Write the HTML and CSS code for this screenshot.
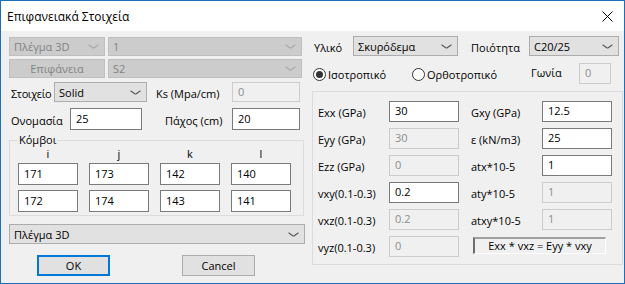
FILE: index.html
```html
<!DOCTYPE html>
<html lang="el">
<head>
    <meta charset="UTF-8">
    <title>Επιφανειακά Στοιχεία</title>
    <link rel="stylesheet" href="styles.css">
</head>
<body>
    <div class="window">
        <div class="titlebar">
            <span class="title">Επιφανειακά Στοιχεία</span>
            <svg class="close" width="11" height="11" viewBox="0 0 11 11">
                <path d="M0.5 0.5 L10.5 10.5 M10.5 0.5 L0.5 10.5" stroke="#000" stroke-width="1" fill="none"/>
            </svg>
        </div>
        <div class="content">
            <!-- left side -->
            <div class="left">
                <div class="row r1">
                    <div class="combo disabled mesh-type"><span>Πλέγμα 3D</span><i class="chev"></i></div>
                    <div class="combo disabled mesh-id"><span>1</span><i class="chev"></i></div>
                </div>
                <div class="row r2">
                    <button class="btn disabled mesh-type" disabled>Επιφάνεια</button>
                    <div class="combo disabled mesh-id"><span>S2</span><i class="chev"></i></div>
                </div>
                <div class="row r3">
                    <span class="lbl lbl-elem">Στοιχείο</span>
                    <div class="combo elem-type"><span>Solid</span><i class="chev"></i></div>
                    <span class="lbl lbl-ks">Ks (Mpa/cm)</span>
                    <input class="field small" type="text" value="0" disabled>
                </div>
                <div class="row r4">
                    <span class="lbl lbl-name">Ονομασία</span>
                    <input class="field name" type="text" value="25">
                    <span class="lbl lbl-thick">Πάχος (cm)</span>
                    <input class="field small" type="text" value="20">
                </div>
                <fieldset class="nodes">
                    <legend>Κόμβοι</legend>
                    <div class="node-grid heads">
                        <span>i</span><span>j</span><span>k</span><span>l</span>
                    </div>
                    <div class="node-grid inputs">
                        <input class="field" type="text" value="171">
                        <input class="field" type="text" value="173">
                        <input class="field" type="text" value="142">
                        <input class="field" type="text" value="140">
                        <input class="field" type="text" value="172">
                        <input class="field" type="text" value="174">
                        <input class="field" type="text" value="143">
                        <input class="field" type="text" value="141">
                    </div>
                </fieldset>
                <div class="combo mesh-wide"><span>Πλέγμα 3D</span><i class="chev"></i></div>
                <div class="buttons">
                    <button class="btn ok">OK</button>
                    <button class="btn cancel">Cancel</button>
                </div>
            </div>

            <!-- right side -->
            <div class="right">
                <div class="row material-row">
                    <span class="lbl lbl-mat">Υλικό</span>
                    <div class="combo material"><span>Σκυρόδεμα</span><i class="chev"></i></div>
                    <span class="lbl lbl-quality">Ποιότητα</span>
                    <div class="combo quality"><span>C20/25</span><i class="chev"></i></div>
                </div>
                <div class="row radio-row">
                    <label class="radio iso"><span class="dot checked"></span>Ισοτροπικό</label>
                    <label class="radio ortho"><span class="dot"></span>Ορθοτροπικό</label>
                    <span class="lbl lbl-angle">Γωνία</span>
                    <input class="field angle" type="text" value="0" disabled>
                </div>
                <div class="props">
                    <span class="lbl">Exx (GPa)</span>
                    <input class="field" type="text" value="30">
                    <span class="lbl col2">Gxy (GPa)</span>
                    <input class="field" type="text" value="12.5">

                    <span class="lbl">Eyy (GPa)</span>
                    <input class="field" type="text" value="30" disabled>
                    <span class="lbl col2">ε (kN/m3)</span>
                    <input class="field" type="text" value="25">

                    <span class="lbl">Ezz (GPa)</span>
                    <input class="field" type="text" value="0" disabled>
                    <span class="lbl col2">atx*10-5</span>
                    <input class="field" type="text" value="1">

                    <span class="lbl">vxy(0.1-0.3)</span>
                    <input class="field" type="text" value="0.2">
                    <span class="lbl col2">aty*10-5</span>
                    <input class="field" type="text" value="1" disabled>

                    <span class="lbl">vxz(0.1-0.3)</span>
                    <input class="field" type="text" value="0.2" disabled>
                    <span class="lbl col2">atxy*10-5</span>
                    <input class="field" type="text" value="1" disabled>

                    <span class="lbl">vyz(0.1-0.3)</span>
                    <input class="field" type="text" value="0" disabled>
                    <div class="formula">Exx * vxz = Eyy * vxy</div>
                </div>
            </div>
        </div>
    </div>
</body>
</html>
```

FILE: styles.css
```css
* {
    margin: 0;
    padding: 0;
    box-sizing: border-box;
}
body {
    margin: 0;
    background: #fff;
    font-family: 'Open Sans', 'Noto Sans', sans-serif;
    font-size: 11px;
    color: #000;
}
.window {
    width: 625px;
    height: 284px;
    border: 1px solid #1c6fb8;
    background: #f0f0f0;
    display: flex;
    flex-direction: column;
}
.titlebar {
    height: 30px;
    flex: none;
    background: #fff;
    display: flex;
    align-items: center;
    justify-content: space-between;
    padding: 0 11px 0 6px;
}
.title {
    font-size: 12px;
}
.content {
    display: flex;
    gap: 7px;
    padding: 6px 0 0 8px;
}
.row {
    display: flex;
    align-items: center;
}
.lbl {
    padding-top: 2px;
    white-space: nowrap;
}

/* combo boxes */
.combo {
    display: flex;
    align-items: center;
    justify-content: space-between;
    height: 100%;
    padding: 0 6px 0 4px;
    background: #e1e1e1;
    border: 1px solid #adadad;
    white-space: nowrap;
}
.combo .chev {
    width: 9px;
    height: 5px;
    flex: none;
    position: relative;
}
.combo .chev::before,
.combo .chev::after {
    content: '';
    position: absolute;
    top: 2px;
    width: 6px;
    height: 1px;
    background: #555;
}
.combo .chev::before {
    left: -1px;
    transform: rotate(35deg);
}
.combo .chev::after {
    right: -1px;
    transform: rotate(-35deg);
}
.combo.disabled {
    background: #cccccc;
    border-color: #bfbfbf;
    color: #838383;
}
.combo.disabled .chev::before,
.combo.disabled .chev::after {
    background: #a8a8a8;
}

/* text fields */
.field {
    height: 100%;
    border: 1px solid #7a7a7a;
    background: #fff;
    font-family: inherit;
    font-size: 11px;
    color: #000;
    padding: 0 0 2px 5px;
    outline: none;
}
.field:disabled {
    background: #f0f0f0;
    border-color: #cccccc;
    color: #8d8d8d;
}

/* buttons */
.btn {
    font-family: inherit;
    font-size: 11px;
    background: #e1e1e1;
    border: 1px solid #adadad;
    color: #000;
}
.btn.disabled {
    background: #cccccc;
    border-color: #bfbfbf;
    color: #838383;
}

/* left column */
.left {
    width: 296px;
    display: flex;
    flex-direction: column;
}
.r1 {
    height: 19px;
    gap: 3px;
}
.r2 {
    height: 19px;
    gap: 3px;
    margin-top: 3px;
}
.mesh-type {
    width: 96px;
    height: 100%;
}
.mesh-id {
    width: 194px;
}
.r3 {
    height: 20px;
    margin-top: 4px;
}
.lbl-elem {
    width: 45px;
    padding-left: 2px;
    letter-spacing: -0.4px;
}
.elem-type {
    width: 93px;
}
.lbl-ks {
    width: 85px;
    padding-left: 9px;
}
.field.small {
    width: 68px;
}
.r4 {
    height: 22px;
    margin-top: 6px;
}
.lbl-name {
    width: 61px;
    padding-left: 2px;
}
.field.name {
    width: 72px;
}
.lbl-thick {
    width: 90px;
    padding-left: 23px;
}

.nodes {
    width: 295px;
    margin-top: 5px;
    border: 1px solid #dcdcdc;
    padding: 0 8px 3px 8px;
    min-width: 0;
}
.nodes legend {
    padding: 0 1px;
    line-height: 10px;
}
.node-grid {
    display: grid;
    grid-template-columns: repeat(4, 60px);
    column-gap: 11px;
}
.node-grid.heads {
    margin-top: 2px;
    line-height: 13px;
    text-align: center;
}
.node-grid.inputs {
    margin-top: 3px;
    row-gap: 5px;
    grid-auto-rows: 22px;
}
.mesh-wide {
    width: 296px;
    height: 20px;
    margin-top: 8px;
}
.buttons {
    display: flex;
    margin-top: 11px;
    height: 21px;
}
.buttons .btn {
    width: 73px;
}
.btn.ok {
    margin-left: 28px;
    border: 2px solid #0078d7;
}
.btn.cancel {
    margin-left: 72px;
}

/* right column */
.right {
    width: 311px;
    display: flex;
    flex-direction: column;
    margin-top: -1px;
}
.material-row {
    height: 20px;
}
.lbl-mat {
    width: 41px;
    padding-left: 2px;
}
.material {
    width: 105px;
}
.lbl-quality {
    width: 71px;
    padding-left: 13px;
}
.quality {
    width: 90px;
}
.radio-row {
    height: 21px;
    margin-top: 7px;
}
.radio {
    display: flex;
    align-items: center;
    gap: 2px;
    padding-top: 1px;
}
.radio.iso {
    width: 100px;
    padding-left: 1px;
}
.radio.ortho {
    width: 119px;
}
.dot {
    width: 13px;
    height: 13px;
    border: 1px solid #333;
    border-radius: 50%;
    background: #fff;
    display: flex;
    align-items: center;
    justify-content: center;
}
.dot.checked::after {
    content: '';
    width: 7px;
    height: 7px;
    border-radius: 50%;
    background: #333;
}
.lbl-angle {
    width: 48px;
    padding-top: 0;
    padding-bottom: 2px;
}
.field.angle {
    width: 32px;
}

.props {
    margin-top: 7px;
    height: 174px;
    border: 1px solid #dcdcdc;
    padding: 9px 9px 7px 5px;
    display: grid;
    grid-template-columns: 71px 70px 83px 70px;
    grid-auto-rows: 21px;
    row-gap: 6px;
    align-items: center;
}
.props .field {
    height: 21px;
}
.props .col2 {
    padding-left: 12px;
}
.formula {
    grid-column: 3 / 5;
    align-self: start;
    margin: 1px 6px 0 14px;
    height: 17px;
    border-top: 2px solid #a0a0a0;
    border-left: 2px solid #6d6d6d;
    border-right: 1px solid #fff;
    border-bottom: 1px solid #fff;
    text-align: center;
    line-height: 13px;
}
```
